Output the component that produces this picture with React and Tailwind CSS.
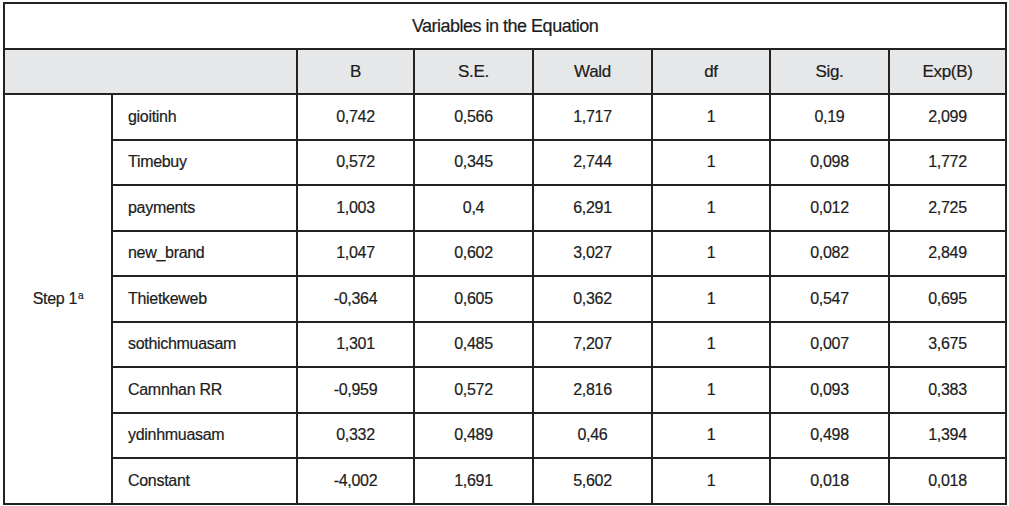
import React from "react";

const cols = ["B", "S.E.", "Wald", "df", "Sig.", "Exp(B)"];

const rows = [
  ["gioitinh", "0,742", "0,566", "1,717", "1", "0,19", "2,099"],
  ["Timebuy", "0,572", "0,345", "2,744", "1", "0,098", "1,772"],
  ["payments", "1,003", "0,4", "6,291", "1", "0,012", "2,725"],
  ["new_brand", "1,047", "0,602", "3,027", "1", "0,082", "2,849"],
  ["Thietkeweb", "-0,364", "0,605", "0,362", "1", "0,547", "0,695"],
  ["sothichmuasam", "1,301", "0,485", "7,207", "1", "0,007", "3,675"],
  ["Camnhan RR", "-0,959", "0,572", "2,816", "1", "0,093", "0,383"],
  ["ydinhmuasam", "0,332", "0,489", "0,46", "1", "0,498", "1,394"],
  ["Constant", "-4,002", "1,691", "5,602", "1", "0,018", "0,018"],
];

const widths = ["w-[117px]", "w-[119px]", "w-[119px]", "w-[118px]", "w-[119px]", "w-[117px]"];

const cell = "border-2 border-[#222]";

export default function App() {
  return (
    <div className="bg-white w-[1009px] h-[506px] pt-[2px] pl-[3px] font-['Liberation_Sans',Arial,sans-serif] text-[16px] tracking-[-0.3px] text-[#1c1c1c] [-webkit-text-stroke:0.2px_#1c1c1c]">
      <table className="border-collapse table-fixed w-[1002px]">
        <colgroup>
          <col className="w-[108px]" />
          <col className="w-[185px]" />
          {widths.map((w, i) => (
            <col key={i} className={w} />
          ))}
        </colgroup>
        <tbody>
          <tr className="h-[46px]">
            <td colSpan={8} className={`${cell} text-center text-[18px] tracking-[-0.5px]`}>
              Variables in the Equation
            </td>
          </tr>
          <tr className="h-[45px] bg-[#e6e7e8]">
            <td colSpan={2} className={cell}></td>
            {cols.map((c) => (
              <td key={c} className={`${cell} text-center text-[17px]`}>
                {c}
              </td>
            ))}
          </tr>
          {rows.map((r, i) => (
            <tr key={r[0]} className="h-[45.5px]">
              {i === 0 && (
                <td rowSpan={9} className={`${cell} text-center`}>
                  Step 1<span className="relative -top-[5px] ml-[1px] text-[10px]">a</span>
                </td>
              )}
              <td className={`${cell} pl-[15px]`}>{r[0]}</td>
              {r.slice(1).map((v, j) => (
                <td key={j} className={`${cell} text-center`}>
                  {v}
                </td>
              ))}
            </tr>
          ))}
        </tbody>
      </table>
    </div>
  );
}
